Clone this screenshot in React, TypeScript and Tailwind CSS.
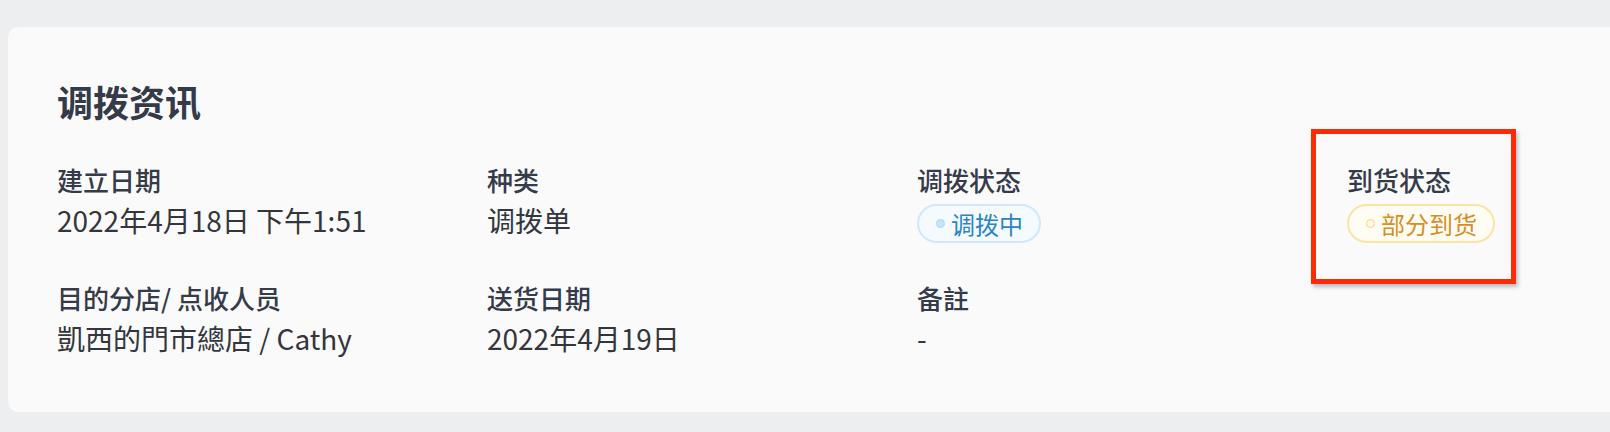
import React from 'react';

type Tone = 'blue' | 'amber';

interface Field {
  label: string;
  value?: string;
  badge?: { text: string; tone: Tone };
  marked?: boolean;
}

const fields: Field[] = [
  { label: '建立日期', value: '2022年4月18日 下午1:51' },
  { label: '种类', value: '调拨单' },
  { label: '调拨状态', badge: { text: '调拨中', tone: 'blue' } },
  { label: '到货状态', badge: { text: '部分到货', tone: 'amber' }, marked: true },
  { label: '目的分店/ 点收人员', value: '凱西的門市總店 / Cathy' },
  { label: '送货日期', value: '2022年4月19日' },
  { label: '备註', value: '-' },
];

const StatusBadge: React.FC<{ text: string; tone: Tone }> = ({ text, tone }) => {
  const blue = tone === 'blue';
  return (
    <span
      className={`mt-[6px] inline-flex h-[39px] items-center gap-[6px] rounded-full border-2 pl-[17px] pr-[16px] text-[24px] leading-none ${
        blue
          ? 'border-[#cfe8fb] bg-[#f5fafe] text-[#2a86c2]'
          : 'border-[#fde2a4] bg-[#fffcf4] text-[#d68f25]'
      }`}
    >
      <span
        className={`h-[9px] w-[9px] rounded-full border ${
          blue ? 'border-[#abd7f5] bg-[#c6e5fa]' : 'border-[#f9d27e] bg-[#fff8e6]'
        }`}
      />
      {text}
    </span>
  );
};

const InfoCell: React.FC<{ field: Field }> = ({ field }) => (
  <div className="relative flex flex-col items-start">
    {field.marked && (
      <div className="pointer-events-none absolute left-[-36px] top-[-33px] h-[155px] w-[205px] border-[5px] border-[#fb2a08] shadow-[2px_3px_4px_rgba(0,0,0,0.25)]" />
    )}
    <div className="text-[26px] font-medium leading-[36px] text-[#353b4a]">{field.label}</div>
    {field.badge ? (
      <StatusBadge text={field.badge.text} tone={field.badge.tone} />
    ) : (
      <div className="mt-[2px] text-[28px] leading-[40px] text-[#33363d]">{field.value}</div>
    )}
  </div>
);

export default function App() {
  return (
    <div className="h-[432px] w-[1610px] overflow-hidden bg-[#edeef0] pl-[8px] pt-[27px] font-['Noto_Sans_CJK_SC','Noto_Sans',sans-serif]">
      <section className="w-[1800px] rounded-[10px] bg-[#fafafa] pb-[54px] pl-[49px] pt-[52px]">
        <h2 className="text-[36px] font-bold leading-[44px] text-[#343a48]">调拨资讯</h2>
        <div className="mt-[39px] grid grid-cols-[430px_430px_430px_430px] gap-y-[37px]">
          {fields.map((f) => (
            <InfoCell key={f.label} field={f} />
          ))}
        </div>
      </section>
    </div>
  );
}
